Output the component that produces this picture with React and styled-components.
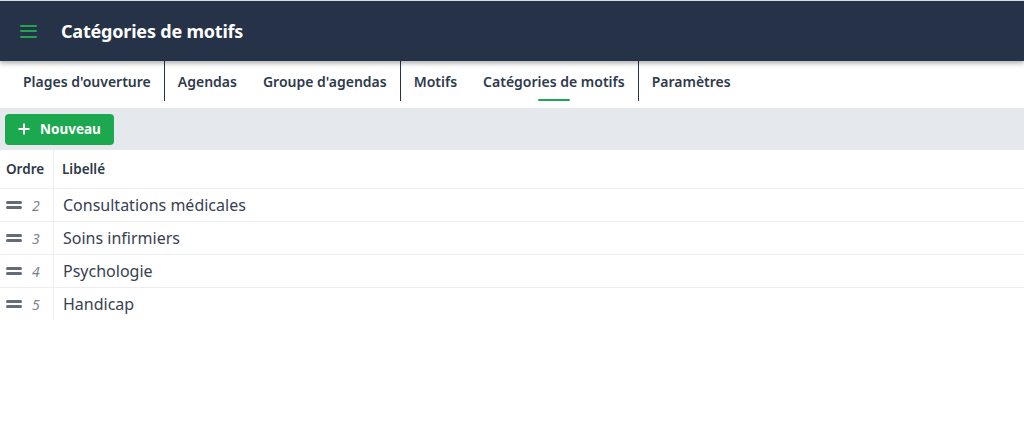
import React from "react";
import styled, { createGlobalStyle } from "styled-components";

const GlobalStyle = createGlobalStyle`
  body {
    margin: 0;
    background: #fff;
    font-family: "Noto Sans", "Open Sans", sans-serif;
    color: #2d3748;
  }
`;

const TopBar = styled.header`
  height: 60px;
  border-top: 1px solid #d9dce1;
  background: #253247;
  display: flex;
  align-items: center;
  padding-left: 20px;
  gap: 24px;
  box-shadow: 0 2px 5px rgba(0, 0, 0, 0.35);
  position: relative;
  z-index: 1;
`;

const Burger = styled.button`
  border: 0;
  background: none;
  padding: 0;
  width: 17px;
  height: 13px;
  display: flex;
  flex-direction: column;
  justify-content: space-between;
  cursor: pointer;

  span {
    display: block;
    height: 2px;
    background: #22a552;
    border-radius: 1px;
  }
`;

const Title = styled.h1`
  margin: 0;
  font-size: 18px;
  font-weight: 700;
  color: #fff;
  letter-spacing: -0.2px;
`;

const Tabs = styled.nav`
  height: 47px;
  display: flex;
  padding-left: 10px;
  box-sizing: border-box;
`;

const Tab = styled.a`
  height: 40px;
  display: flex;
  align-items: center;
  padding: 0 13px;
  font-size: 14px;
  font-weight: 600;
  color: #2d3a4b;
  position: relative;
  cursor: pointer;
  border-right: ${(p) => (p.$divider ? "1px solid #253247" : "none")};

  &::after {
    content: "";
    display: ${(p) => (p.$active ? "block" : "none")};
    position: absolute;
    left: 50%;
    bottom: 0;
    width: 32px;
    height: 2px;
    margin-left: -16px;
    background: #22a552;
    border-radius: 1px;
  }
`;

const Toolbar = styled.div`
  height: 42px;
  background: #e5e8ed;
  display: flex;
  align-items: center;
  padding-left: 5px;
`;

const AddButton = styled.button`
  height: 31px;
  width: 109px;
  border: 0;
  border-radius: 4px;
  background: #1ba84f;
  color: #fff;
  font-family: inherit;
  font-size: 13.5px;
  font-weight: 700;
  display: flex;
  align-items: center;
  justify-content: center;
  gap: 10px;
  cursor: pointer;
`;

const Table = styled.div`
  display: grid;
  grid-template-columns: 54px 1fr;
`;

const HeadCell = styled.div`
  height: 38px;
  display: flex;
  align-items: center;
  padding-left: ${(p) => (p.$first ? "6px" : "8px")};
  font-size: 13.5px;
  font-weight: 600;
  color: #2d3748;
  border-bottom: 1px solid #eceef2;
  border-right: ${(p) => (p.$first ? "1px solid #eceef2" : "none")};
`;

const OrderCell = styled.div`
  height: 32px;
  display: flex;
  align-items: center;
  padding-left: 6px;
  gap: 10px;
  border-right: 1px solid #eceef2;
  border-bottom: ${(p) => (p.$last ? "none" : "1px solid #eceef2")};
`;

const Handle = styled.span`
  width: 16px;
  display: flex;
  flex-direction: column;
  gap: 2px;
  cursor: grab;

  &::before,
  &::after {
    content: "";
    height: 3px;
    background: #646b78;
    border-radius: 1.5px;
  }
`;

const Rank = styled.span`
  font-size: 14px;
  font-style: italic;
  color: #7a8290;
`;

const LabelCell = styled.div`
  height: 32px;
  display: flex;
  align-items: center;
  padding-left: 9px;
  font-size: 16px;
  color: #374151;
  border-bottom: ${(p) => (p.$last ? "none" : "1px solid #eceef2")};
`;

const tabs = [
  { label: "Plages d'ouverture", divider: true },
  { label: "Agendas" },
  { label: "Groupe d'agendas", divider: true },
  { label: "Motifs" },
  { label: "Catégories de motifs", divider: true, active: true },
  { label: "Paramètres" },
];

const categories = [
  { rank: 2, label: "Consultations médicales" },
  { rank: 3, label: "Soins infirmiers" },
  { rank: 4, label: "Psychologie" },
  { rank: 5, label: "Handicap" },
];

export default function App() {
  return (
    <>
      <GlobalStyle />
      <TopBar>
        <Burger aria-label="Menu">
          <span />
          <span />
          <span />
        </Burger>
        <Title>Catégories de motifs</Title>
      </TopBar>
      <Tabs>
        {tabs.map((t) => (
          <Tab key={t.label} $divider={t.divider} $active={t.active}>
            {t.label}
          </Tab>
        ))}
      </Tabs>
      <Toolbar>
        <AddButton>
          <svg width="12" height="12" viewBox="0 0 12 12">
            <path d="M6 0.5v11M0.5 6h11" stroke="#fff" strokeWidth="2" />
          </svg>
          Nouveau
        </AddButton>
      </Toolbar>
      <Table>
        <HeadCell $first>Ordre</HeadCell>
        <HeadCell>Libellé</HeadCell>
        {categories.map((c, i) => {
          const last = i === categories.length - 1;
          return (
            <React.Fragment key={c.rank}>
              <OrderCell $last={last}>
                <Handle />
                <Rank>{c.rank}</Rank>
              </OrderCell>
              <LabelCell $last={last}>{c.label}</LabelCell>
            </React.Fragment>
          );
        })}
      </Table>
    </>
  );
}
